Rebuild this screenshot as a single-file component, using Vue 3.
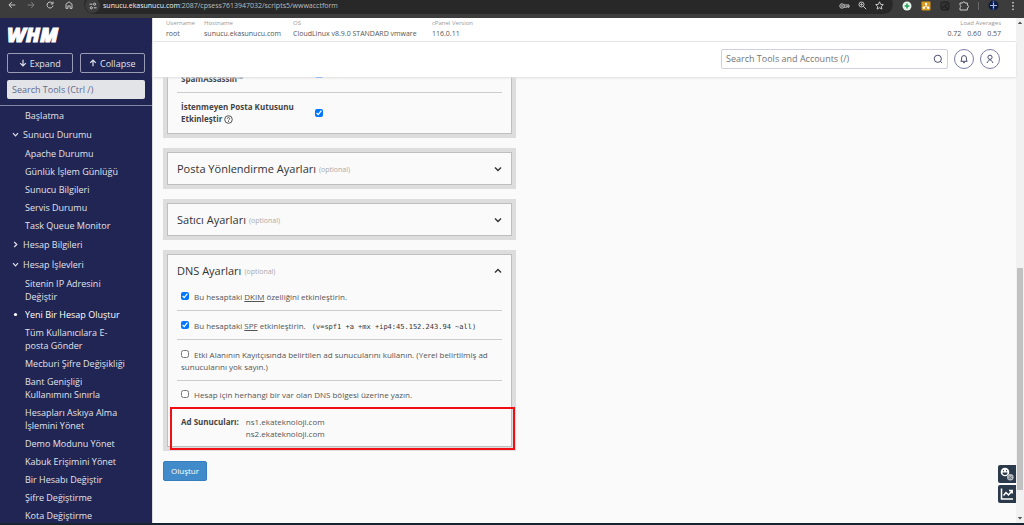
<script setup>
import { ref } from 'vue'

const nav = [
  { text: 'Başlatma' },
  { text: 'Sunucu Durumu', kind: 'open' },
  { text: 'Apache Durumu' },
  { text: 'Günlük İşlem Günlüğü' },
  { text: 'Sunucu Bilgileri' },
  { text: 'Servis Durumu' },
  { text: 'Task Queue Monitor' },
  { text: 'Hesap Bilgileri', kind: 'closed' },
  { text: 'Hesap İşlevleri', kind: 'open' },
  { text: 'Sitenin IP Adresini Değiştir' },
  { text: 'Yeni Bir Hesap Oluştur', kind: 'current' },
  { text: 'Tüm Kullanıcılara E-posta Gönder' },
  { text: 'Mecburi Şifre Değişikliği' },
  { text: 'Bant Genişliği Kullanımını Sınırla' },
  { text: 'Hesapları Askıya Alma İşlemini Yönet' },
  { text: 'Demo Modunu Yönet' },
  { text: 'Kabuk Erişimini Yönet' },
  { text: 'Bir Hesabı Değiştir' },
  { text: 'Şifre Değiştirme' },
  { text: 'Kota Değiştirme' },
]

const info = [
  { label: 'Username', value: 'root' },
  { label: 'Hostname', value: 'sunucu.ekasunucu.com' },
  { label: 'OS', value: 'CloudLinux v8.9.0 STANDARD vmware' },
  { label: 'cPanel Version', value: '116.0.11' },
]

const collapsed = ['Posta Yönlendirme Ayarları', 'Satıcı Ayarları']
const spamAssassin = ref(true)
const spamBox = ref(true)
const dkim = ref(true)
const spf = ref(true)
const useNs = ref(false)
const overwrite = ref(false)
</script>

<template>
  <div class="screen">
    <div class="browser">
      <div class="nav-buttons">
        <button aria-label="Back"><svg width="8" height="8" viewBox="0 0 8 8"><path d="M7.3 4H1M3.8 1.1L.9 4l2.9 2.9" /></svg></button>
        <button aria-label="Forward" class="dim"><svg width="8" height="8" viewBox="0 0 8 8"><path d="M.7 4H7M4.2 1.1L7.1 4 4.2 6.9" /></svg></button>
        <button aria-label="Reload"><svg width="8" height="8" viewBox="0 0 8 8"><path d="M6.7 2.6A3 3 0 1 0 7 4.6M7 .6v2.3H4.7" /></svg></button>
        <button aria-label="Home"><svg width="8" height="8" viewBox="0 0 8 8"><path d="M1 3.2L4 .8l3 2.4v4.2H5.1V4.9H2.9v2.5H1z" /></svg></button>
      </div>
      <div class="address">
        <span class="site"><svg width="8" height="8" viewBox="0 0 8 8"><path d="M.5 2.2h3M4.8 5.8h2.8" /><circle cx="5.6" cy="2.2" r="1.1" /><circle cx="2.3" cy="5.8" r="1.1" /></svg></span>
        <span class="url"><b>sunucu.ekasunucu.com</b>:2087/cpsess7613947032/scripts5/wwwacctform</span>
        <span class="address-icons">
          <svg width="11" height="8" viewBox="0 0 11 8"><circle cx="3" cy="4" r="2.2" /><circle cx="3" cy="4" r=".5" /><path d="M5 3h5v2.200H8.800V4.400h-1v.8H5" /></svg>
          <svg width="9" height="9" viewBox="0 0 9 9"><circle cx="3.5" cy="3.5" r="2.5" /><path d="M5.4 5.4L8.200 8.200M2.300 3.500h2.400M3.500 2.300v2.400" /></svg>
          <svg width="9" height="9" viewBox="0 0 9 9"><path d="M4.500.8l1.100 2.500 2.700.3-2 1.800.6 2.700-2.400-1.400-2.400 1.400.6-2.700-2-1.800 2.700-.3z" /></svg>
        </span>
      </div>
      <div class="extensions">
        <svg width="10" height="10" viewBox="0 0 10 10"><circle cx="5" cy="5" r="4.5" fill="#e9f5ec" stroke="none" /><path d="M5 2.600v4.800M2.600 5h4.800" stroke="#25a05a" stroke-width="1.5" /></svg>
        <svg width="10" height="10" viewBox="0 0 10 10"><rect x=".5" y=".5" width="9" height="9" rx="1" fill="#d79a1e" stroke="none" /><g fill="#fff" stroke="none"><circle cx="5" cy="3" r="1.2" /><circle cx="2.9" cy="6.7" r="1.3" /><circle cx="7.1" cy="6.7" r="1.3" /></g><path d="M5 3v2L3 6.500M5 5l2 1.500" stroke="#fff" stroke-width=".7" /></svg>
        <svg width="10" height="10" viewBox="0 0 10 10"><rect x="1" y="1" width="8" height="8" rx="1.5" stroke="#1d1d1d" fill="#333" /><path d="M2 7.500l2.300-2.300L8 8M5 5l2.500-2.500" stroke="#161616" /></svg>
        <svg width="10" height="10" viewBox="0 0 10 10"><path d="M1 2h2.600a1.200 1.200 0 0 1 2.400 0h2.400v2.400a1.200 1.200 0 0 1 0 2.400V9H1V6.600a1.200 1.200 0 0 0 0-2.200z" /></svg>
        <i class="separator"></i>
        <svg width="11" height="11" viewBox="0 0 11 11"><circle cx="5.5" cy="5.5" r="5" fill="#0c1a3c" stroke="none" /><path d="M5.500.8v9.400" stroke="#3c64d8" stroke-width="1.5" /><path d="M2 5.500h7M5.500 3v5" stroke="#a9b9dc" /></svg>
        <svg class="more" width="4" height="10" viewBox="0 0 4 10"><g fill="#c8c8c8" stroke="none"><circle cx="2" cy="1.7" r=".9" /><circle cx="2" cy="5" r=".9" /><circle cx="2" cy="8.3" r=".9" /></g></svg>
      </div>
    </div>

    <div class="page">
      <aside class="sidebar">
        <div class="brand">
          <svg class="logo" width="64" height="28" viewBox="0 0 64 28" role="img" aria-label="WHM"><text x="0" y="21">WHM</text></svg>
          <div class="pair">
            <button><svg width="8" height="8" viewBox="0 0 8 8"><path d="M4 .8v6M1.200 4.100L4 6.900l2.800-2.800" /></svg>Expand</button>
            <button><svg width="8" height="8" viewBox="0 0 8 8"><path d="M4 7.200v-6M1.200 3.900L4 1.100l2.800 2.800" /></svg>Collapse</button>
          </div>
          <input type="text" placeholder="Search Tools (Ctrl /)" aria-label="Search Tools" />
        </div>
        <nav>
          <a v-for="n in nav" :key="n.text" href="#" :class="n.kind">
            <svg v-if="n.kind === 'open'" width="7" height="7" viewBox="0 0 7 7"><path d="M1 2.200l2.500 2.600L6 2.200" /></svg>
            <svg v-else-if="n.kind === 'closed'" width="7" height="7" viewBox="0 0 7 7"><path d="M2.200 1l2.600 2.500L2.200 6" /></svg>
            <svg v-else-if="n.kind === 'current'" width="7" height="7" viewBox="0 0 7 7"><circle cx="3.5" cy="3.5" r="1.6" /></svg>
            <span>{{ n.text }}</span>
          </a>
        </nav>
      </aside>

      <div class="main">
        <div class="info">
          <dl v-for="i in info" :key="i.label"><dt>{{ i.label }}</dt><dd>{{ i.value }}</dd></dl>
          <dl class="load"><dt>Load Averages</dt><dd><span>0.72</span><span>0.60</span><span>0.57</span></dd></dl>
        </div>
        <header>
          <div class="search">
            <input type="text" placeholder="Search Tools and Accounts (/)" aria-label="Search Tools and Accounts" />
            <button aria-label="Search"><svg width="10" height="10" viewBox="0 0 10 10"><circle cx="4.8" cy="4.8" r="3.6" /><path d="M7.300 7.300L9 9" /></svg></button>
          </div>
          <button class="round" aria-label="Notifications"><svg width="10" height="10" viewBox="0 0 10 10"><path d="M1.800 7.300h6.400L7.400 6V4a2.400 2.400 0 0 0-4.800 0v2zM4 8.600h2" /></svg></button>
          <button class="round" aria-label="Account"><svg width="10" height="10" viewBox="0 0 10 10"><circle cx="5" cy="3.3" r="2.1" /><path d="M2.300 9V8L5 5.500 7.700 8v1" /></svg></button>
        </header>

        <main>
          <form @submit.prevent>
            <section class="panel first">
              <div class="setting">
                <label for="sa">SpamAssassin™</label>
                <input id="sa" v-model="spamAssassin" type="checkbox" />
              </div>
              <div class="setting">
                <label for="sb">İstenmeyen Posta Kutusunu Etkinleştir
                  <svg width="9" height="9" viewBox="0 0 9 9"><circle cx="4.5" cy="4.5" r="3.8" /><path d="M3.300 3.600a1.200 1.200 0 1 1 1.800 1.100C4.500 5 4.500 5.100 4.500 5.500M4.500 6.200v.8" /></svg></label>
                <input id="sb" v-model="spamBox" type="checkbox" />
              </div>
            </section>

            <section v-for="c in collapsed" :key="c" class="panel">
              <h3>{{ c }} <small>(optional)</small><button type="button" :aria-label="c"><svg width="8" height="8" viewBox="0 0 8 8"><path d="M1 2.500l3 3 3-3" /></svg></button></h3>
            </section>

            <section class="panel">
              <h3>DNS Ayarları <small>(optional)</small><button type="button" aria-label="DNS Ayarları"><svg width="8" height="8" viewBox="0 0 8 8"><path d="M1 5.500l3-3 3 3" /></svg></button></h3>
              <div class="option"><label><input v-model="dkim" type="checkbox" />Bu hesaptaki <u>DKIM</u> özelliğini etkinleştirin.</label></div>
              <div class="option"><label><input v-model="spf" type="checkbox" />Bu hesaptaki <u>SPF</u> etkinleştirin. <code>(v=spf1 +a +mx +ip4:45.152.243.94 ~all)</code></label></div>
              <div class="option"><label><input v-model="useNs" type="checkbox" />Etki Alanının Kayıtçısında belirtilen ad sunucularını kullanın. (Yerel belirtilmiş ad sunucularını yok sayın.)</label></div>
              <div class="option"><label><input v-model="overwrite" type="checkbox" />Hesap için herhangi bir var olan DNS bölgesi üzerine yazın.</label></div>
              <div class="servers">
                <strong>Ad Sunucuları:</strong>
                <div>ns1.ekateknoloji.com<br />ns2.ekateknoloji.com</div>
              </div>
            </section>
            <button class="submit">Oluştur</button>
          </form>
        </main>

        <div class="floating">
          <button aria-label="Feedback"><svg width="14" height="14" viewBox="0 0 14 14"><circle cx="5" cy="5" r="4.3" fill="#fff" /><path d="M2.500 5.600h5a2.500 2.500 0 0 1-5 0z" fill="#2b3a4a" /><circle cx="3.5" cy="3.7" r=".6" fill="#2b3a4a" /><circle cx="6.5" cy="3.7" r=".6" fill="#2b3a4a" /><circle cx="10.3" cy="10.3" r="3.3" fill="#b4b9be" /><path d="M8.600 11.500q1.700-1.500 3.400 0M9.200 9.200v.6M11.400 9.200v.6" stroke="#2b3a4a" fill="none" stroke-width=".7" /></svg></button>
          <button aria-label="Statistics"><svg width="14" height="14" viewBox="0 0 14 14"><path d="M1.500 1.500v10.500h11.500M3.500 8.500l2.500-3 2.500 2.500 3.500-4M9 3.500h3.200v3" stroke="#fff" fill="none" stroke-width="1.5" /></svg></button>
        </div>
      </div>

      <div class="scrollbar">
        <svg width="6" height="10" viewBox="0 0 6 10"><path d="M.8 6L3 3.600 5.200 6z" fill="#505050" /></svg>
        <div class="track"><div class="thumb"></div></div>
        <svg width="6" height="10" viewBox="0 0 6 10"><path d="M.8 4L3 6.400 5.200 4z" fill="#505050" /></svg>
      </div>
    </div>
    <div class="taskbar"></div>
  </div>
</template>

<style>
body { margin: 0; overflow: hidden; }
</style>

<style scoped>
* { box-sizing: border-box; }
button, input { font: inherit; color: inherit; }
button { padding: 0; background: none; border: 0; display: flex; align-items: center; justify-content: center; }
svg { display: block; flex: none; }
.screen { height: 100vh; display: flex; flex-direction: column; font-family: "Open Sans", "Noto Sans", sans-serif; font-size: 8px; line-height: 12px; color: #555; background: #fafafa; }

.browser { height: 18px; flex: none; display: flex; align-items: flex-start; background: #3c3c3c; overflow: hidden; }
.browser svg { fill: none; stroke: #c8c8c8; stroke-width: 1; }
.nav-buttons { display: flex; gap: 11px; padding: 1px 11px 0 8px; }
.nav-buttons .dim { opacity: .5; }
.address { flex: 1; height: 19px; margin-top: -5px; padding: 2px 9px 0 1px; display: flex; align-items: center; background: #282828; border-radius: 10px; }
.site { width: 15px; height: 15px; border-radius: 8px; background: #3c3c3c; display: flex; align-items: center; justify-content: center; }
.url { flex: 1; margin-left: 3px; font-size: 7px; color: #bdbdbd; white-space: nowrap; }
.url b { font-weight: 400; color: #f2f2f2; }
.address-icons { display: flex; align-items: center; gap: 8px; }
.extensions { display: flex; align-items: center; gap: 9px; padding: 0 9px; }
.extensions .more { margin-left: 3px; }
.separator { width: 1px; height: 8px; background: #666; }

.page { flex: 1; min-height: 0; display: flex; }
.sidebar { width: 152px; flex: none; background: #202553; color: #e1e2ea; font-size: 9px; line-height: 13px; overflow: hidden; }
.brand { padding: 3px 7px 6px; border-bottom: 1px solid #8487a3; }
.logo text { font: italic 800 20px "Open Sans", sans-serif; fill: #fff; stroke: #fff; stroke-width: 1; }
.pair { display: flex; gap: 7px; margin: 4px 0 7px; }
.pair button { flex: 1; height: 20px; gap: 3px; border: 1px solid #9a9cb5; border-radius: 2px; }
.pair svg, nav svg { fill: none; stroke: #e1e2ea; stroke-width: 1.2; }
.brand input { display: block; width: 100%; height: 19px; padding: 0 5px; border: 0; border-radius: 2px; background: #e3e4e8; color: #555; }
.brand input::placeholder { color: #666a8c; opacity: 1; }
nav a { display: flex; align-items: flex-start; padding: 3px 22px 2px 25px; color: inherit; text-decoration: none; }
nav .open, nav .closed { align-items: center; gap: 4px; padding: 4px 10px 3px 12px; }
nav .current { align-items: center; gap: 6px; padding-left: 12px; padding-right: 10px; color: #fff; }
nav .current svg { fill: #fff; stroke: none; }

.main { flex: 1; min-width: 0; position: relative; display: flex; flex-direction: column; border-left: 1px solid #ddd; }
.info { flex: none; height: 24px; display: grid; grid-template-columns: 31px 82px 132px auto 1fr; gap: 7px; padding: 0 15px 0 13px; background: #fff; border-bottom: 1px solid #e6e6e6; }
dl, dd { margin: 0; white-space: nowrap; }
dt { font-size: 6px; line-height: 10px; color: #999; }
dd { font-size: 7px; line-height: 12px; color: #555; }
.load { text-align: right; }
.load dd { display: flex; justify-content: flex-end; gap: 6px; }
header { flex: none; height: 35px; display: flex; justify-content: flex-end; align-items: center; padding: 0 16px 2px 13px; background: #fff; box-shadow: 0 1px 2px #ddd; z-index: 1; }
.search { width: 227px; height: 20px; display: flex; border: 1px solid #cfcfde; border-radius: 2px; }
.search input { flex: 1; min-width: 0; padding: 0 4px; border: 0; background: none; font-size: 9px; outline: 0; }
.search input::placeholder { color: #757575; opacity: 1; }
.search button { width: 18px; }
header svg { fill: none; stroke: #4a4d70; stroke-width: 1; }
.round { width: 20px; height: 20px; margin-left: 6px; border: 1px solid #7c7da5; border-radius: 50%; }

main { flex: 1; min-height: 0; overflow: hidden; padding: 0 10px; }
form { max-width: 353px; }
.panel { margin: 0 0 10px; padding: 0 10px; border: 4px solid #ddd; outline: 1px solid #bfbfbf; outline-offset: -5px; }
.first { margin-top: -16px; padding-bottom: 1px; }
.setting { min-height: 28px; display: flex; align-items: center; padding: 0 4px; border-bottom: 1px solid #ccc; }
.setting:first-child input { align-self: flex-start; margin-top: 5px; }
.setting + .setting { min-height: 40px; border: 0; }
.setting label { width: 134px; padding-right: 8px; font-weight: 700; color: #444; }
.setting svg { display: inline-block; vertical-align: -2px; fill: none; stroke: #444; stroke-width: .9; }
input[type="checkbox"] { width: 8px; height: 8px; margin: 0; accent-color: #0075ff; }
h3 { display: flex; align-items: center; gap: 3px; height: 33px; margin: 0; font-size: 11px; font-weight: 400; color: #333; }
h3 small { font-size: 7px; color: #aaa; padding-top: 3px; }
h3 button { margin-left: auto; }
h3 svg { fill: none; stroke: #333; stroke-width: 1.4; }
.option { padding: 9px 4px 7px; border-bottom: 1px solid #ccc; }
h3 + .option { padding-top: 4px; }
.option:nth-of-type(4) { padding-top: 8px; border: 0; }
.option input { margin-right: 5px; vertical-align: 0; }
u { text-underline-offset: 1px; }
code { margin-left: 4px; font: 7px "DejaVu Sans Mono", monospace; color: #333; }
.servers { position: relative; display: flex; gap: 7px; padding: 8px 4px 7px; }
.servers strong { color: #444; }
.servers::after { content: ""; position: absolute; inset: -1px -13px -3px -7px; border: 2px solid #f00f14; }
.submit { height: 20px; padding: 0 7px; background: #428bca; border: 1px solid #357ebd; border-radius: 2px; color: #fff; }

.floating { position: absolute; right: 0; bottom: 20px; display: flex; flex-direction: column; gap: 2px; }
.floating button { width: 18px; height: 18px; background: #2b3a4a; border-radius: 2px 0 0 2px; }
.scrollbar { width: 8px; flex: none; display: flex; flex-direction: column; align-items: center; background: #f1f1f1; }
.track { flex: 1; width: 6px; display: grid; grid-template-rows: 240fr 222fr 23fr; }
.thumb { grid-row: 2; background: #c1c1c1; }
.taskbar { flex: none; height: 2px; background: #172430; }
</style>
